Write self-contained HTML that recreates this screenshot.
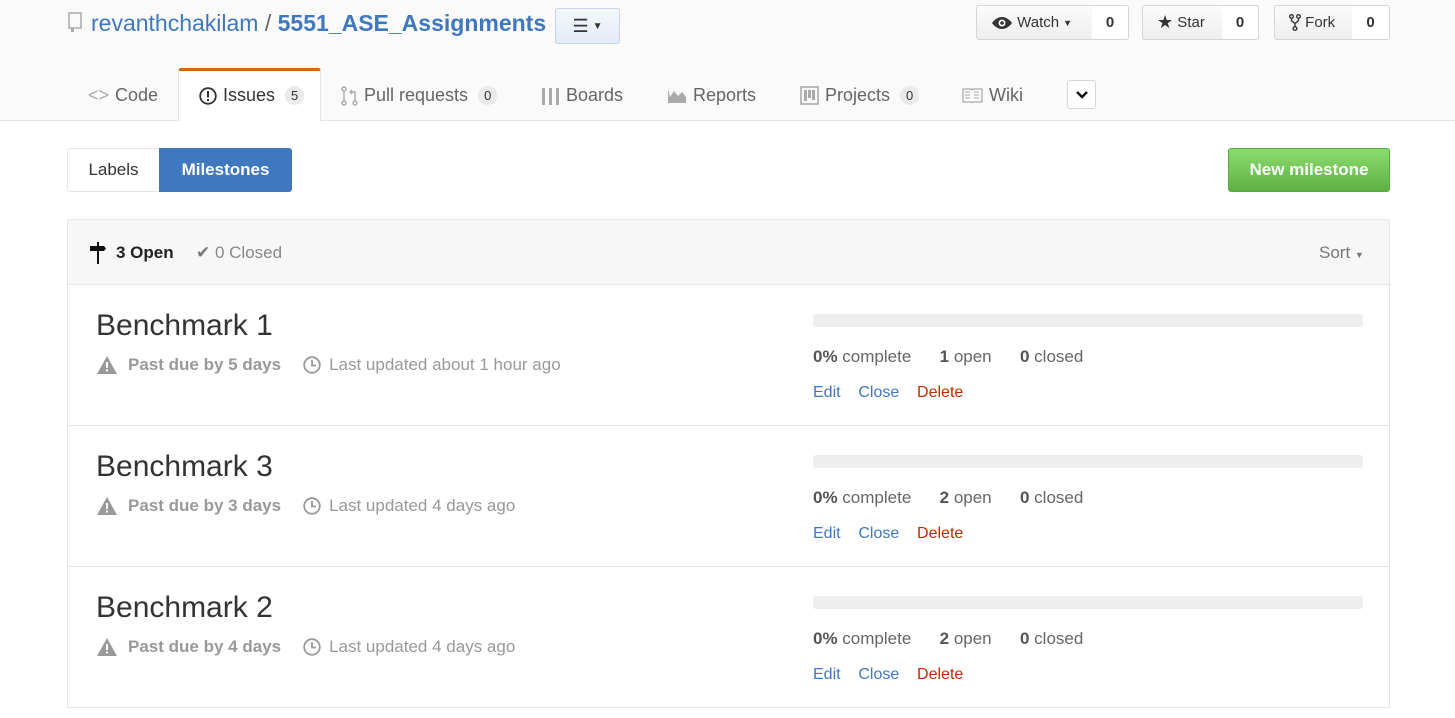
<!DOCTYPE html>
<html><head><meta charset="utf-8"><style>
*{box-sizing:border-box;margin:0;padding:0}
body{width:1455px;height:718px;overflow:hidden;background:#fff;font-family:"Liberation Sans",sans-serif;color:#333;position:relative}
.a{position:absolute;white-space:nowrap}
.hdr{position:absolute;left:0;top:0;width:1455px;height:121px;background:#fafafa;border-bottom:1px solid #e5e5e5}
.btn{position:absolute;height:35px;border:1px solid #d5d5d5;border-radius:3px;background:linear-gradient(#fcfcfc,#eee);font-size:15px;color:#333;display:flex;align-items:center}
.cnt{position:absolute;top:5px;height:35px;border:1px solid #d5d5d5;border-left:none;border-radius:0 3px 3px 0;background:#fff;font-size:15px;font-weight:bold;display:flex;align-items:center;justify-content:center}
.tab{position:absolute;top:85px;font-size:18px;color:#666;display:flex;align-items:center;gap:6px}
.badge{display:inline-block;background:#eaeaea;border-radius:10px;font-size:13px;padding:2px 6px;color:#333;margin-left:4px}
.row{position:absolute;left:67px;width:1323px;height:141px;border:1px solid #e5e5e5;border-top:none}
.t{position:absolute;left:28px;top:24px;font-size:30px;color:#333}
.m{position:absolute;left:28px;top:70px;font-size:17px;color:#999;display:flex;align-items:center}
.bar{position:absolute;left:745px;top:29px;width:550px;height:13px;background:#eee;border-radius:3px}
.st{position:absolute;left:745px;top:62px;font-size:17px;color:#666}
.st b{color:#555}
.ln{position:absolute;left:745px;top:99px;font-size:16px;color:#4078c0}
</style></head><body>
<div class="hdr"></div>
<svg class="a" style="left:68px;top:12px" width="14" height="20" viewBox="0 0 14 20"><rect x="1" y="1" width="12" height="15" fill="none" stroke="#aaa" stroke-width="1.5"/><rect x="3" y="16" width="3" height="4" fill="#aaa"/></svg>
<div class="a" style="left:91px;top:10px;font-size:23px;color:#4078c0">revanthchakilam <span style="color:#666">/</span> <b>5551_ASE_Assignments</b></div>
<div class="btn" style="left:555px;top:8px;width:65px;height:36px;background:linear-gradient(#f4f8fd,#e3ebf5);border-color:#c7d4e6;justify-content:center;font-size:18px">☰ <span style="font-size:10px;margin-left:4px">▼</span></div>

<div class="btn" style="left:976px;top:5px;width:117px;border-radius:3px 0 0 3px;padding-left:14px"><svg width="22" height="14" viewBox="0 0 22 14"><path d="M11 1C5 1 1 7 1 7s4 6 10 6 10-6 10-6-4-6-10-6z" fill="#333"/><circle cx="11" cy="7" r="3.5" fill="#fff"/><circle cx="11" cy="7" r="1.8" fill="#333"/></svg>&nbsp;Watch <span style="font-size:9px;margin-left:4px">▼</span></div>
<div class="cnt" style="left:1092px;width:37px">0</div>
<div class="btn" style="left:1142px;top:5px;width:81px;border-radius:3px 0 0 3px;padding-left:14px"><span style="font-size:18px">★</span>&nbsp;Star</div>
<div class="cnt" style="left:1222px;width:37px">0</div>
<div class="btn" style="left:1274px;top:5px;width:79px;border-radius:3px 0 0 3px;padding-left:14px"><svg width="12" height="17" viewBox="0 0 12 17"><circle cx="2.5" cy="2.5" r="1.8" fill="none" stroke="#333" stroke-width="1.4"/><circle cx="9.5" cy="2.5" r="1.8" fill="none" stroke="#333" stroke-width="1.4"/><circle cx="6" cy="14.5" r="1.8" fill="none" stroke="#333" stroke-width="1.4"/><path d="M2.5 4.5v2l3.5 3 3.5-3v-2M6 9.5v3" fill="none" stroke="#333" stroke-width="1.4"/></svg>&nbsp;Fork</div>
<div class="cnt" style="left:1352px;width:38px">0</div>

<div class="a" style="left:178px;top:68px;width:143px;height:54px;background:#fff;border:1px solid #e5e5e5;border-top:3px solid #d26911;border-bottom:none;border-radius:3px 3px 0 0"></div>
<div class="tab" style="left:88px"><span style="color:#aaa">&lt;&gt;</span>Code</div>
<div class="tab" style="left:199px;color:#333"><svg width="18" height="18" viewBox="0 0 18 18"><circle cx="9" cy="9" r="7.8" fill="none" stroke="#333" stroke-width="1.8"/><rect x="8" y="4" width="2" height="6.5" fill="#333"/><rect x="8" y="12" width="2" height="2" fill="#333"/></svg>Issues<span class="badge">5</span></div>
<div class="tab" style="left:341px"><svg width="17" height="20" viewBox="0 0 17 20"><circle cx="3" cy="3" r="2" fill="none" stroke="#aaa" stroke-width="1.4"/><circle cx="3" cy="17" r="2" fill="none" stroke="#aaa" stroke-width="1.4"/><circle cx="14" cy="17" r="2" fill="none" stroke="#aaa" stroke-width="1.4"/><path d="M3 5v10M14 15V6H9M11 4l-2 2 2 2" fill="none" stroke="#aaa" stroke-width="1.4"/></svg>Pull requests<span class="badge">0</span></div>
<div class="tab" style="left:541px"><svg width="19" height="18"><rect x="1" y="1" width="3" height="17" fill="#aaa"/><rect x="8" y="1" width="3" height="17" fill="#aaa"/><rect x="15" y="1" width="3" height="17" fill="#aaa"/></svg>Boards</div>
<div class="tab" style="left:667px"><svg width="20" height="16"><path d="M1 1v14h18v-6l-4-5-4 4-4-5-4 6z" fill="#aaa"/></svg>Reports</div>
<div class="tab" style="left:800px"><svg width="19" height="19"><rect x="1" y="1" width="17" height="17" fill="none" stroke="#aaa" stroke-width="1.6"/><rect x="4" y="4" width="3" height="11" fill="#aaa"/><rect x="8" y="4" width="3" height="8" fill="#aaa"/><rect x="12" y="4" width="3" height="10" fill="#aaa"/></svg>Projects<span class="badge">0</span></div>
<div class="tab" style="left:962px"><svg width="21" height="15"><path d="M1 1h8l1 1 1-1h9v13H11l-1 1-1-1H1z" fill="none" stroke="#aaa" stroke-width="1.3"/><path d="M3 4h5M3 7h5M3 10h5M12 4h5M12 7h5M12 10h5" stroke="#aaa"/></svg>Wiki</div>
<div class="a" style="left:1067px;top:80px;width:29px;height:29px;border:1px solid #d5d5d5;border-radius:3px;background:#fff;display:flex;align-items:center;justify-content:center"><svg width="12" height="8"><path d="M1 1l5 5 5-5" fill="none" stroke="#111" stroke-width="2.5"/></svg></div>

<div class="a" style="left:67px;top:148px;width:93px;height:44px;border:1px solid #e5e5e5;border-radius:3px 0 0 3px;font-size:17px;color:#333;display:flex;align-items:center;justify-content:center">Labels</div>
<div class="a" style="left:159px;top:148px;width:133px;height:44px;background:#4078c0;border-radius:0 3px 3px 0;font-size:17px;font-weight:bold;color:#fff;display:flex;align-items:center;justify-content:center">Milestones</div>
<div class="a" style="left:1228px;top:148px;width:162px;height:44px;background:linear-gradient(#8add6d,#60b044);border:1px solid #5ca941;border-radius:3px;font-size:17px;font-weight:bold;color:#fff;display:flex;align-items:center;justify-content:center">New milestone</div>

<div class="a" style="left:67px;top:219px;width:1323px;height:66px;background:#f7f7f7;border:1px solid #e5e5e5;border-radius:3px 3px 0 0"></div>
<svg class="a" style="left:89px;top:242px" width="18" height="22" viewBox="0 0 18 22"><rect x="8" y="0" width="2" height="22" fill="#111"/><path d="M1 4h14l2 2.5-2 2.5H1z" fill="#111"/></svg>
<div class="a" style="left:116px;top:243px;font-size:17px;font-weight:bold;color:#222">3 Open</div>
<div class="a" style="left:196px;top:243px;font-size:17px;color:#888"><span style="color:#777">✔</span> 0 Closed</div>
<div class="a" style="left:1319px;top:243px;font-size:17px;color:#777">Sort <span style="font-size:9px">▼</span></div>

<div class="row" style="top:285px">
<div class="t">Benchmark 1</div>
<div class="m"><svg width="22" height="20" viewBox="0 0 22 20"><path d="M11 1L21 19H1z" fill="#999"/><rect x="10" y="7" width="2" height="6" fill="#fff"/><rect x="10" y="14.5" width="2" height="2" fill="#fff"/></svg><b style="margin:0 22px 0 10px">Past due by 5 days</b><svg width="18" height="18" viewBox="0 0 18 18"><circle cx="9" cy="9" r="7.8" fill="none" stroke="#999" stroke-width="1.8"/><path d="M9 4v5.5h4" fill="none" stroke="#999" stroke-width="1.8"/></svg><span style="margin-left:8px">Last updated about 1 hour ago</span></div>
<div class="bar"></div>
<div class="st"><b>0%</b> complete &nbsp;&nbsp;&nbsp;&nbsp; <b>1</b> open &nbsp;&nbsp;&nbsp;&nbsp; <b>0</b> closed</div>
<div class="ln">Edit &nbsp;&nbsp; Close &nbsp;&nbsp; <span style="color:#bd2c00">Delete</span></div>
</div>
<div class="row" style="top:426px">
<div class="t">Benchmark 3</div>
<div class="m"><svg width="22" height="20" viewBox="0 0 22 20"><path d="M11 1L21 19H1z" fill="#999"/><rect x="10" y="7" width="2" height="6" fill="#fff"/><rect x="10" y="14.5" width="2" height="2" fill="#fff"/></svg><b style="margin:0 22px 0 10px">Past due by 3 days</b><svg width="18" height="18" viewBox="0 0 18 18"><circle cx="9" cy="9" r="7.8" fill="none" stroke="#999" stroke-width="1.8"/><path d="M9 4v5.5h4" fill="none" stroke="#999" stroke-width="1.8"/></svg><span style="margin-left:8px">Last updated 4 days ago</span></div>
<div class="bar"></div>
<div class="st"><b>0%</b> complete &nbsp;&nbsp;&nbsp;&nbsp; <b>2</b> open &nbsp;&nbsp;&nbsp;&nbsp; <b>0</b> closed</div>
<div class="ln">Edit &nbsp;&nbsp; Close &nbsp;&nbsp; <span style="color:#bd2c00">Delete</span></div>
</div>
<div class="row" style="top:567px">
<div class="t">Benchmark 2</div>
<div class="m"><svg width="22" height="20" viewBox="0 0 22 20"><path d="M11 1L21 19H1z" fill="#999"/><rect x="10" y="7" width="2" height="6" fill="#fff"/><rect x="10" y="14.5" width="2" height="2" fill="#fff"/></svg><b style="margin:0 22px 0 10px">Past due by 4 days</b><svg width="18" height="18" viewBox="0 0 18 18"><circle cx="9" cy="9" r="7.8" fill="none" stroke="#999" stroke-width="1.8"/><path d="M9 4v5.5h4" fill="none" stroke="#999" stroke-width="1.8"/></svg><span style="margin-left:8px">Last updated 4 days ago</span></div>
<div class="bar"></div>
<div class="st"><b>0%</b> complete &nbsp;&nbsp;&nbsp;&nbsp; <b>2</b> open &nbsp;&nbsp;&nbsp;&nbsp; <b>0</b> closed</div>
<div class="ln">Edit &nbsp;&nbsp; Close &nbsp;&nbsp; <span style="color:#bd2c00">Delete</span></div>
</div>
</body></html>
